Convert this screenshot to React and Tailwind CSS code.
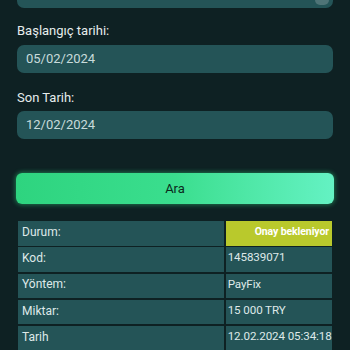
export default function App() {
  const rows = [
    ["Durum:", "Onay bekleniyor", true],
    ["Kod:", "145839071"],
    ["Yöntem:", "PayFix"],
    ["Miktar:", "15 000 TRY"],
    ["Tarih", "12.02.2024 05:34:18"],
  ];
  return (
    <div
      className="w-[350px] h-[350px] overflow-hidden bg-[#0e2123] px-[17px]"
      style={{ fontFamily: "Roboto, 'Noto Sans', sans-serif" }}
    >
      <div className="relative -mt-[30px] h-[38px] rounded-[7px] bg-[#245457]">
        <div className="absolute right-[4px] bottom-[3px] h-[10px] w-[14px] rounded-full bg-[#4f7477]" />
      </div>
      <div className="mt-[15px] text-[13px] leading-[15px] text-[#e6eded]">Başlangıç tarihi:</div>
      <div className="mt-[7px] flex h-[28px] items-center rounded-[7px] bg-[#245457] pl-[9px] text-[13px] text-[#c8dbdb]">
        05/02/2024
      </div>
      <div className="mt-[17px] text-[13px] leading-[15px] text-[#e6eded]">Son Tarih:</div>
      <div className="mt-[6px] flex h-[28px] items-center rounded-[7px] bg-[#245457] pl-[9px] text-[13px] text-[#c8dbdb]">
        12/02/2024
      </div>
      <div className="-mx-[1px] mt-[34px] flex h-[31px] items-center justify-center rounded-[6px] bg-gradient-to-r from-[#2ed47f] via-[#3ade8e] to-[#64f2c3] text-[13px] text-[#0b2a1c] shadow-[0_0_4px_1px_rgba(46,212,127,0.45)]">
        Ara
      </div>
      <div className="mt-[17px] ml-[1px] mr-[1px] grid grid-cols-[206px_1fr] gap-[1.7px]">
        {rows.map(([k, v, hl]) => (
          <>
            <div key={k + "k"} className="flex h-[24.6px] items-center bg-[#245457] pl-[4px] pb-[3px] text-[12px] text-[#dfe9e9]">
              {k}
            </div>
            <div
              key={k + "v"}
              className={
                hl
                  ? "flex h-[24.6px] items-center justify-end whitespace-nowrap bg-[#b9c92c] pr-[3px] pb-[3px] text-[10.5px] font-bold tracking-[-0.1px] text-white"
                  : "flex h-[24.6px] items-center whitespace-nowrap bg-[#245457] pl-[2px] pb-[3px] text-[11.6px] tracking-[-0.1px] text-[#dfe9e9]"
              }
            >
              {v}
            </div>
          </>
        ))}
      </div>
    </div>
  );
}
